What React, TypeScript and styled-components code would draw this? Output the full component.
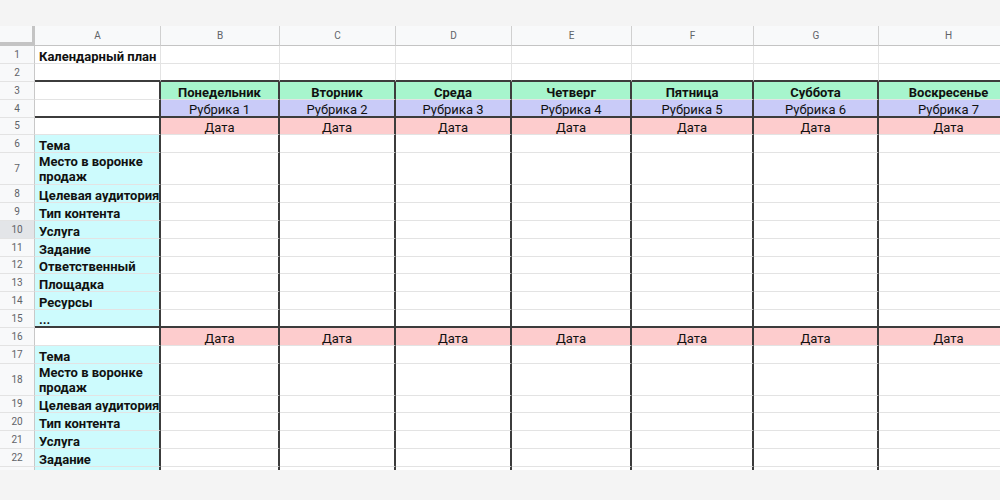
import { createGlobalStyle } from 'styled-components';
import styled from 'styled-components';

const GlobalStyle = createGlobalStyle`
	* {
		box-sizing: border-box;
	}
	body {
		margin: 0;
		background: #f4f4f4;
		font-family: Roboto, 'Liberation Sans', sans-serif;
	}
`;

const COLS = '35px 126px 119px 116px 116px 120px 122px 125px 140px';
const ROW = 17.875;
const TALL = 31.75;

const GREEN = '#a7f5cd';
const LAVENDER = '#c9cbf8';
const PINK = '#fdcccd';
const CYAN = '#cdfbfd';
const GRID = '#e3e3e3';
const INK = '#3c3c3c';

const Page = styled.div`
	height: 500px;
	padding-top: 26px;
	background: #f4f4f4;
`;

const Sheet = styled.div`
	width: 1000px;
	height: 444px;
	overflow: hidden;
	background: #fff;
`;

const Row = styled.div<{ $h: number }>`
	display: grid;
	grid-template-columns: ${COLS};
	height: ${(p) => p.$h}px;
`;

const Corner = styled.div`
	background: #f8f9fa;
	border-right: 3px solid #c4c4c4;
	border-bottom: 4px solid #c4c4c4;
`;

const ColHead = styled.div`
	display: flex;
	align-items: center;
	justify-content: center;
	background: #f8f9fa;
	border-right: 1px solid #d0d0d0;
	border-bottom: 1px solid #c4c4c4;
	color: #5f6368;
	font-size: 10px;
`;

const RowNum = styled.div<{ $active?: boolean }>`
	display: flex;
	align-items: center;
	justify-content: center;
	background: ${(p) => (p.$active ? '#e3e5e8' : '#f8f9fa')};
	border-right: 1px solid #c8c8c8;
	border-bottom: 1px solid ${GRID};
	color: #5f6368;
	font-size: 10px;
`;

const Cell = styled.div<{
	$bg?: string;
	$bold?: boolean;
	$center?: boolean;
	$thickR?: boolean;
	$thickB?: boolean;
}>`
	display: flex;
	align-items: flex-end;
	justify-content: ${(p) => (p.$center ? 'center' : 'flex-start')};
	padding: 0 4px;
	overflow: hidden;
	background: ${(p) => p.$bg || '#fff'};
	border-right: ${(p) => (p.$thickR ? `2px solid ${INK}` : `1px solid ${GRID}`)};
	border-bottom: ${(p) => (p.$thickB ? `2px solid ${INK}` : `1px solid ${GRID}`)};
	color: #111;
	font-size: 13px;
	font-weight: ${(p) => (p.$bold ? 700 : 400)};
	line-height: 12px;
	white-space: nowrap;
	text-align: ${(p) => (p.$center ? 'center' : 'left')};
`;

const Wrapped = styled.span`
	display: block;
	line-height: 15px;
	white-space: normal;
`;

const LETTERS = ['A', 'B', 'C', 'D', 'E', 'F', 'G', 'H'];
const DAYS = ['Понедельник', 'Вторник', 'Среда', 'Четверг', 'Пятница', 'Суббота', 'Воскресенье'];

const LABELS = [
	'Тема',
	'Место в воронке продаж',
	'Целевая аудитория',
	'Тип контента',
	'Услуга',
	'Задание',
	'Ответственный',
	'Площадка',
	'Ресурсы',
	'...',
];

type Kind = 'title' | 'blank' | 'days' | 'rubric' | 'date' | 'label';

interface RowSpec {
	n: number;
	kind: Kind;
	label?: string;
	thickB?: boolean;
	hidden?: boolean;
}

const rows: RowSpec[] = [
	{ n: 1, kind: 'title' },
	{ n: 2, kind: 'blank', thickB: true },
	{ n: 3, kind: 'days' },
	{ n: 4, kind: 'rubric', thickB: true },
	{ n: 5, kind: 'date' },
	...LABELS.map((label, i) => ({ n: 6 + i, kind: 'label' as Kind, label, thickB: i === LABELS.length - 1 })),
	{ n: 16, kind: 'date' },
	...LABELS.slice(0, 6).map((label, i) => ({ n: 17 + i, kind: 'label' as Kind, label })),
	// row 23 only peeks in under the fold
	{ n: 23, kind: 'label', label: '', hidden: true },
];

function SheetRow({ spec }: { spec: RowSpec }) {
	const tall = spec.label === 'Место в воронке продаж';
	const framed = spec.n >= 3;
	const cells = [];

	for (let c = 0; c < 8; c++) {
		const thickR = framed && c < 7;
		const thickB = spec.thickB;
		if (c === 0) {
			if (spec.kind === 'title') {
				cells.push(
					<Cell key={c} $bold>
						Календарный план
					</Cell>,
				);
			} else if (spec.kind === 'label') {
				cells.push(
					<Cell key={c} $bold $bg={CYAN} $thickR={thickR} $thickB={thickB}>
						{tall ? <Wrapped>{spec.label}</Wrapped> : spec.label}
					</Cell>,
				);
			} else {
				cells.push(<Cell key={c} $thickR={thickR} $thickB={thickB} />);
			}
			continue;
		}

		let bg: string | undefined;
		let text = '';
		let bold = false;
		if (spec.kind === 'days') {
			bg = GREEN;
			text = DAYS[c - 1];
			bold = true;
		} else if (spec.kind === 'rubric') {
			bg = LAVENDER;
			text = `Рубрика ${c}`;
		} else if (spec.kind === 'date') {
			bg = PINK;
			text = 'Дата';
		}
		cells.push(
			<Cell key={c} $center $bg={bg} $bold={bold} $thickR={thickR} $thickB={thickB}>
				{text}
			</Cell>,
		);
	}

	return (
		<Row $h={tall ? TALL : ROW}>
			<RowNum $active={spec.n === 10}>{spec.hidden ? '' : spec.n}</RowNum>
			{cells}
		</Row>
	);
}

function App() {
	return (
		<Page>
			<GlobalStyle />
			<Sheet>
				<Row $h={20}>
					<Corner />
					{LETTERS.map((l) => (
						<ColHead key={l}>{l}</ColHead>
					))}
				</Row>
				{rows.map((r) => (
					<SheetRow key={r.n} spec={r} />
				))}
			</Sheet>
		</Page>
	);
}

export default App;
